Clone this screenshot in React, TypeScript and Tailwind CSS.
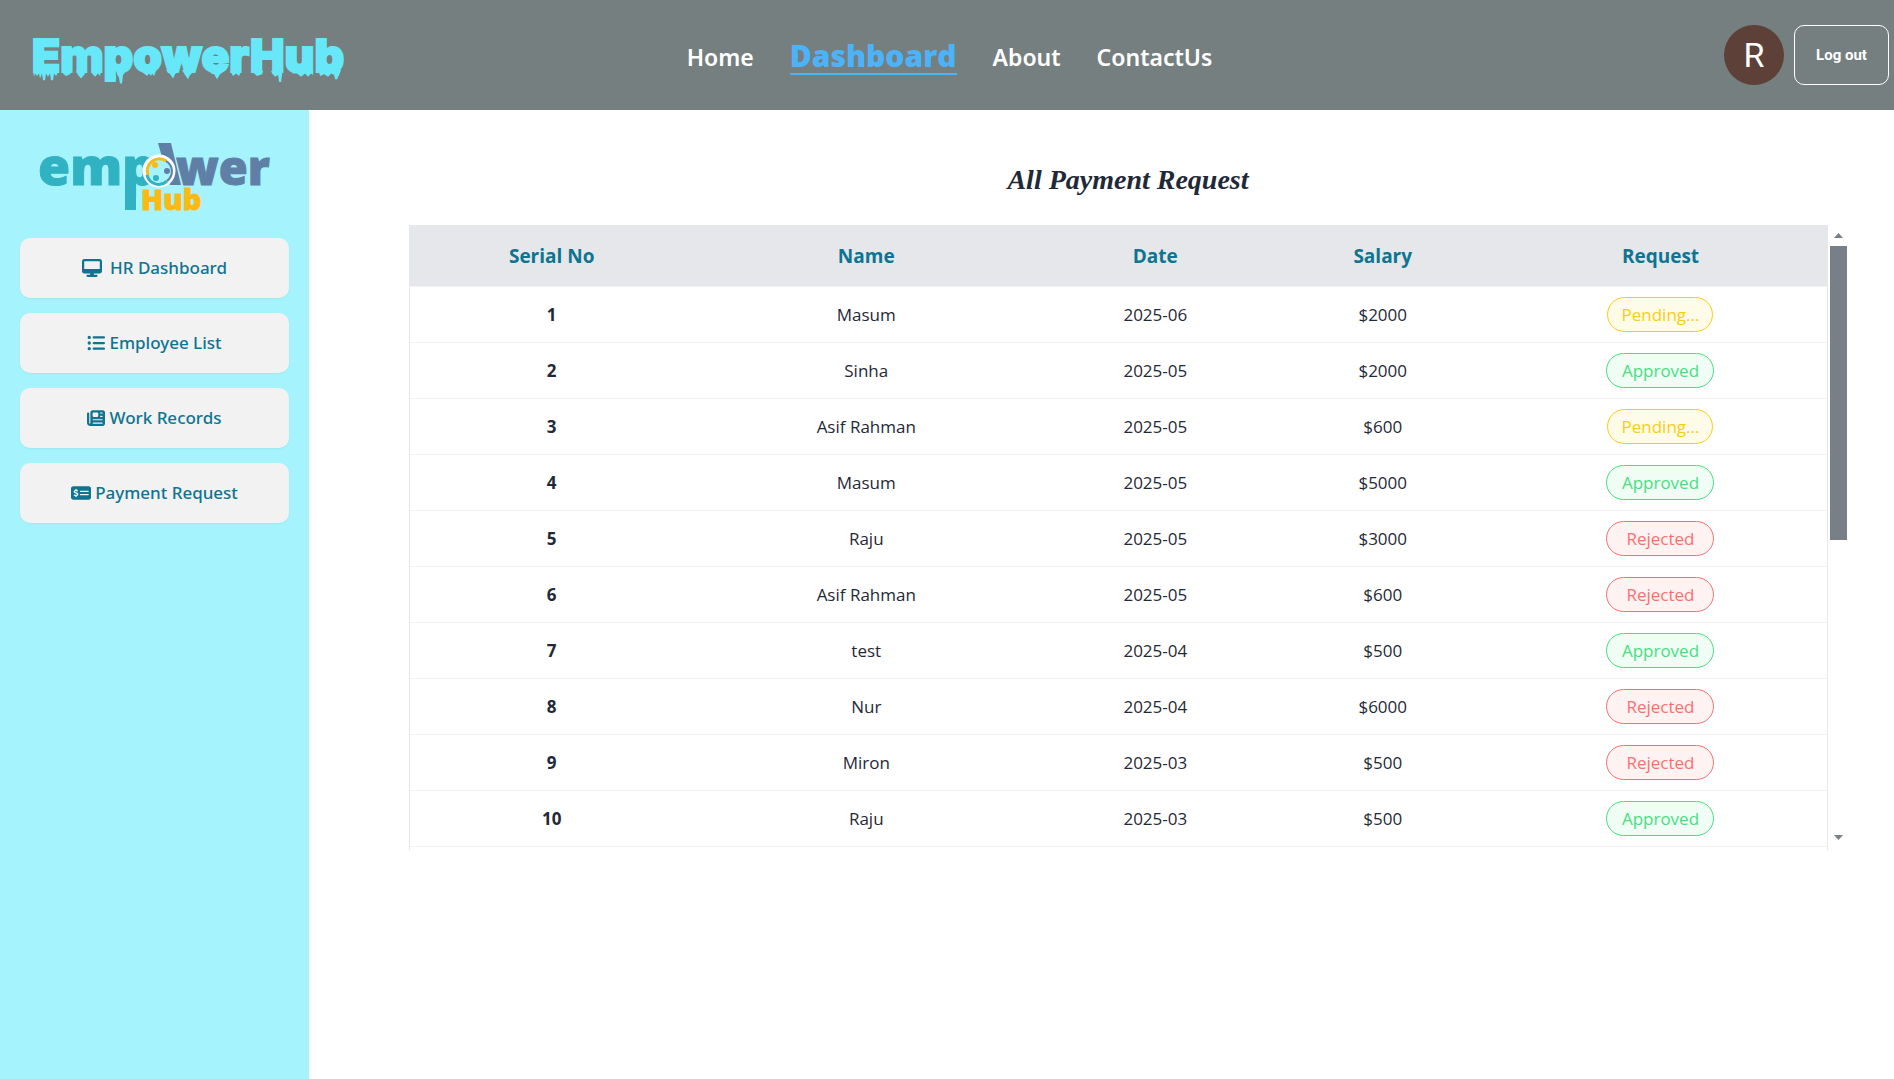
import { FaDesktop, FaListUl, FaMoneyCheckDollar, FaNewspaper } from "react-icons/fa6";
import type { IconType } from "react-icons";

type Status = "Pending..." | "Approved" | "Rejected";

interface PaymentRow {
  name: string;
  date: string;
  salary: string;
  status: Status;
}

const rows: PaymentRow[] = [
  { name: "Masum", date: "2025-06", salary: "$2000", status: "Pending..." },
  { name: "Sinha", date: "2025-05", salary: "$2000", status: "Approved" },
  { name: "Asif Rahman", date: "2025-05", salary: "$600", status: "Pending..." },
  { name: "Masum", date: "2025-05", salary: "$5000", status: "Approved" },
  { name: "Raju", date: "2025-05", salary: "$3000", status: "Rejected" },
  { name: "Asif Rahman", date: "2025-05", salary: "$600", status: "Rejected" },
  { name: "test", date: "2025-04", salary: "$500", status: "Approved" },
  { name: "Nur", date: "2025-04", salary: "$6000", status: "Rejected" },
  { name: "Miron", date: "2025-03", salary: "$500", status: "Rejected" },
  { name: "Raju", date: "2025-03", salary: "$500", status: "Approved" },
];

const statusStyles: Record<Status, string> = {
  "Pending...": "w-[106px] border-[#facc15] bg-[#fefce8] text-[#facc15]",
  Approved: "w-[108px] border-[#4ade80] bg-[#f0fdf4] text-[#4ade80]",
  Rejected: "w-[108px] border-[#f87171] bg-[#fef2f2] text-[#f87171]",
};

const menu: { label: string; icon: IconType; iconClass: string }[] = [
  { label: "HR Dashboard", icon: FaDesktop, iconClass: "mr-1 size-5" },
  { label: "Employee List", icon: FaListUl, iconClass: "size-[18px]" },
  { label: "Work Records", icon: FaNewspaper, iconClass: "size-[18px]" },
  { label: "Payment Request", icon: FaMoneyCheckDollar, iconClass: "size-5" },
];

function Wordmark() {
  return (
    <a href="#home" className="relative ml-[22px] block w-fit text-[#67e8f9]">
      <span className="block font-[Inter,sans-serif] text-[46px] leading-[60px] font-black [-webkit-text-stroke:2px_#67e8f9]">
        EmpowerHub
      </span>
      <svg
        className="absolute top-[45px] left-0 h-[17px] w-full"
        viewBox="0 0 312 20"
        preserveAspectRatio="none"
        fill="currentColor"
        aria-hidden="true"
      >
        <path d="M1 0H26V3L24 7L22 4L21 12L19 12L18 4L16 8L14 4L13 12L11 12L10 4L8 10L7 4L5 7L3 4L2 8Z" />
        <path d="M30 1H40L38 5L34 7L31 4ZM44 1H55L52 6L49 10L46 6ZM59 1H69L68 7L66 4L63 8L60 4Z" />
        <path d="M73 6H84V11L80 13H75L73 10ZM84 1H94L91 6L90 16L88 16L87 9L85 5Z" />
        <path d="M108 1H124L122 7L120 4L119 7L117 4L115 7L112 4Z" />
        <path d="M134 0H147L143 5L141 10L138 5ZM150 0H163L158 6L156 11L153 6Z" />
        <path d="M178 0H194L188 5L185 11L182 5L179 4ZM198 1H209L207 7L204 4L201 7Z" />
        <path d="M221 1H231L230 5L225 7L222 4ZM239 1H250V5L249 14L247 14L246 6L243 8L240 4Z" />
        <path d="M258 0H281V6L279 4L276 8L273 4L269 8L265 4L261 4Z" />
        <path d="M286 0H309L307 6L305 11L303 11L302 6L299 4L296 8L292 5L288 7Z" />
      </svg>
    </a>
  );
}

function SidebarLogo() {
  return (
    <svg
      className="h-[72px] w-[232px] overflow-visible"
      viewBox="0 0 232 72"
      role="img"
      aria-label="empower Hub"
      fontFamily="'Open Sans', sans-serif"
      fontWeight="800"
    >
      <text x="-1" y="45" fontSize="52" fill="#31b2c2" stroke="#31b2c2" strokeWidth="1">
        emp
      </text>
      <path d="M86 40H97V70H86Z" fill="#31b2c2" />
      <path d="M119 3H132L142 45H131Z" fill="#5f7fa6" />
      <text x="137" y="45" fontSize="47" fill="#5f7fa6" stroke="#5f7fa6" strokeWidth="1">
        wer
      </text>
      <circle cx="120" cy="31" r="15" fill="#a5f3fc" stroke="#ffffff" strokeWidth="3" />
      <path d="M109 35A12 12 0 0 1 127 21" fill="none" stroke="#fdb913" strokeWidth="3" />
      <path d="M127 21A12 12 0 0 1 128 41" fill="none" stroke="#5f7fa6" strokeWidth="2" />
      <path d="M108 35A12 12 0 0 0 128 41" fill="none" stroke="#31b2c2" strokeWidth="3" />
      <circle cx="116" cy="25" r="3" fill="#fdb913" />
      <circle cx="128" cy="31" r="3" fill="#5f7fa6" />
      <circle cx="117" cy="38" r="3" fill="#31b2c2" />
      <text x="102" y="70" fontSize="29" fill="#fdb913" stroke="#fdb913" strokeWidth="1">
        Hub
      </text>
    </svg>
  );
}

export default function App() {
  return (
    <div className="flex min-h-screen flex-col bg-white font-['Open_Sans','Noto_Sans',sans-serif] text-[#1f2937]">
      <header className="grid h-[110px] grid-cols-[1fr_auto_1fr] items-center bg-[#767f7f] pr-[5px] pl-2.5">
        <Wordmark />
        <nav className="flex items-center gap-9 pt-1 font-['Noto_Sans',sans-serif] text-[23px] font-semibold text-white">
          <a href="#home">Home</a>
          <a
            href="#dashboard"
            aria-current="page"
            className="border-b-2 border-[#4cb3fb] font-['Open_Sans',sans-serif] text-[30px] leading-[34px] font-extrabold text-[#4cb3fb]"
          >
            Dashboard
          </a>
          <a href="#about">About</a>
          <a href="#contact">ContactUs</a>
        </nav>
        <div className="flex items-center gap-2.5 justify-self-end font-[Roboto,sans-serif] text-white">
          <div className="flex size-[60px] items-center justify-center rounded-full bg-[#5d4037] text-[34px]">
            R
          </div>
          <button
            type="button"
            className="h-[60px] w-[95px] rounded-[10px] border border-white text-[15px] font-bold"
          >
            Log out
          </button>
        </div>
      </header>

      <div className="flex flex-1">
        <aside className="w-[309px] shrink-0 bg-[#a5f3fc] px-5 pt-[30px]">
          <div className="flex h-[98px] items-start justify-center">
            <SidebarLogo />
          </div>
          <nav className="flex flex-col gap-[15px]">
            {menu.map(({ label, icon: Icon, iconClass }) => (
              <button
                key={label}
                type="button"
                className="flex h-[60px] items-center justify-center gap-1 rounded-[10px] bg-[#f2f2f2] font-['Noto_Sans',sans-serif] text-[17px] font-medium text-[#0e7490] shadow-xs"
              >
                <Icon className={iconClass} aria-hidden="true" />
                {label}
              </button>
            ))}
          </nav>
        </aside>

        <main className="min-w-0 flex-1 pt-[50px] pr-[47px] pl-[100px]">
          <h1 className="text-center font-['Liberation_Serif',serif] text-[28px] leading-[40px] font-bold italic">
            All Payment Request
          </h1>
          <div className="mt-[25px] flex gap-0.5">
            <div className="h-[625px] flex-1 overflow-hidden border-x border-[#e5e7eb]">
              <table className="w-full table-fixed border-collapse text-center text-[17px]">
                <colgroup>
                  <col className="w-[20%]" />
                  <col className="w-[24.4%]" />
                  <col className="w-[16.4%]" />
                  <col className="w-[15.7%]" />
                  <col className="w-[23.5%]" />
                </colgroup>
                <thead className="bg-[#e5e7eb] text-[19px] text-[#0e7490]">
                  <tr className="h-[61px] border-b border-[#f2f2f2] *:pt-0.5">
                    <th scope="col">Serial No</th>
                    <th scope="col">Name</th>
                    <th scope="col">Date</th>
                    <th scope="col">Salary</th>
                    <th scope="col">Request</th>
                  </tr>
                </thead>
                <tbody>
                  {rows.map((row, i) => (
                    <tr key={i} className="h-[56px] border-b border-[#f2f2f2]">
                      <th scope="row" className="pt-0.5">{i + 1}</th>
                      <td className="pt-0.5">{row.name}</td>
                      <td className="pt-0.5">{row.date}</td>
                      <td className="pt-0.5">{row.salary}</td>
                      <td>
                        <span
                          className={`mx-auto flex h-[35px] items-center justify-center rounded-full border pt-0.5 ${statusStyles[row.status]}`}
                        >
                          {row.status}
                        </span>
                      </td>
                    </tr>
                  ))}
                </tbody>
              </table>
            </div>
            <div
              className="flex h-[625px] w-[17px] flex-col items-center text-[#797f87]"
              aria-hidden="true"
            >
              <svg className="my-2 w-[9px]" viewBox="0 0 9 5" fill="currentColor">
                <path d="M0 5L4.5 0L9 5Z" />
              </svg>
              <div className="h-[294px] w-full bg-[#797f87]" />
              <svg className="mt-auto mb-2.5 w-[9px]" viewBox="0 0 9 5" fill="currentColor">
                <path d="M0 0L4.5 5L9 0Z" />
              </svg>
            </div>
          </div>
        </main>
      </div>
    </div>
  );
}
